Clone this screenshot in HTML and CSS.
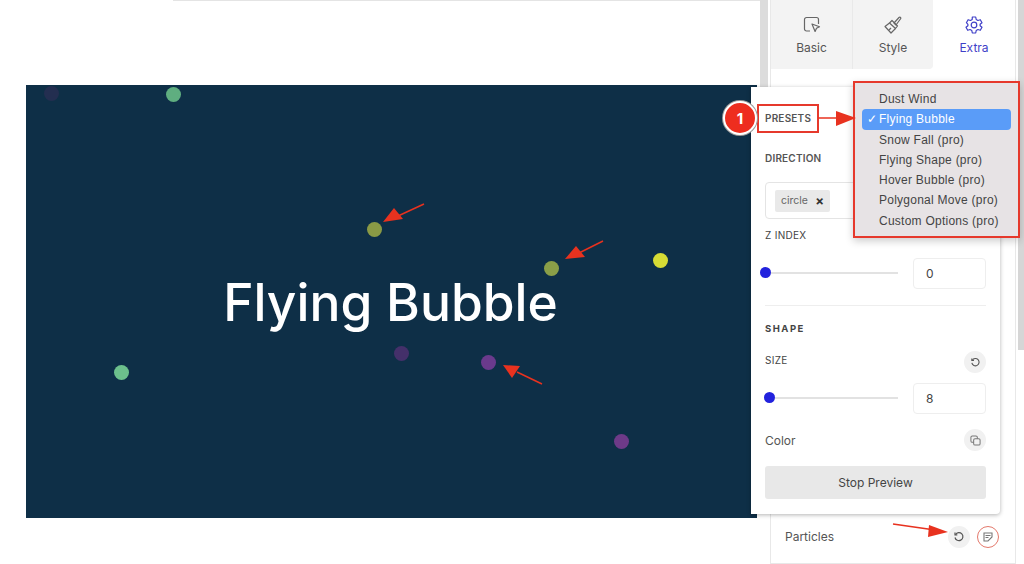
FILE: index.html
```html
<!DOCTYPE html>
<html lang="en">
<head>
  <meta charset="UTF-8">
  <title>Flying Bubble</title>
  <link rel="stylesheet" href="styles.css">
</head>
<body>
  <div class="page">
    <div class="main">
      <div class="topline"></div>
      <div class="banner">
        <span class="bubble b1"></span>
        <span class="bubble b2"></span>
        <span class="bubble b3"></span>
        <span class="bubble b4"></span>
        <span class="bubble b5"></span>
        <span class="bubble b6"></span>
        <span class="bubble b7"></span>
        <span class="bubble b8"></span>
        <span class="bubble b9"></span>
        <h1 class="title">Flying Bubble</h1>
      </div>
    </div>
    <div class="gutter"></div>
    <div class="sidebar">
      <div class="tabs">
        <div class="tab">
          <svg width="20" height="20" viewBox="0 0 20 20" fill="none" stroke="#666" stroke-width="1.200" stroke-linejoin="round"><path d="M8 16H4.500a2 2 0 0 1-2-2V4.500a2 2 0 0 1 2-2h10a2 2 0 0 1 2 2V9"/><path d="M10 9l7.500 2.800-3 1.400-1.400 3.300z"/></svg>
          <span>Basic</span>
        </div>
        <div class="tab tab-style">
          <svg width="20" height="20" viewBox="0 0 20 20" fill="none" stroke="#666" stroke-width="1.200" stroke-linejoin="round"><path d="M11 8l5-5.500c.8-.8 2-.1 1.800 1L13 10z"/><path d="M9 5.500l5.500 5.500-2 2.500L6.500 8z"/><path d="M6.500 8L2 11.500 8 18l4.500-4.500"/><path d="M6 15l2-2"/></svg>
          <span>Style</span>
        </div>
        <div class="tab tab-active">
          <svg width="20" height="20" viewBox="0 0 20 20" fill="none" stroke="#3f3fc8" stroke-width="1.200" stroke-linejoin="round"><path d="M8.300 2h3.400l.5 2.500 1.700 1 2.400-.8 1.700 3-1.900 1.600v1.400l1.900 1.600-1.700 3-2.400-.8-1.700 1-.5 2.500H8.300l-.5-2.500-1.700-1-2.400.8-1.700-3 1.900-1.600V9.300L2.400 7.700l1.700-3 2.400.8 1.700-1z"/><circle cx="10" cy="10" r="2.800"/></svg>
          <span>Extra</span>
        </div>
      </div>
      <div class="particles">
        <span class="particles-name">Particles</span>
        <span class="icon-btn">
          <svg width="12" height="12" viewBox="0 0 12 12" fill="none" stroke="#555" stroke-width="1.200"><path d="M2.500 3.500A4 4 0 1 1 2 6.500"/><path d="M2 1.500v2.300h2.300"/></svg>
        </span>
        <span class="icon-btn icon-btn-ring">
          <svg width="12" height="12" viewBox="0 0 12 12" fill="none" stroke="#777" stroke-width="1.100"><path d="M10 6V2H2v8h4l4-4z"/><path d="M3.500 4.500h5M3.500 6.500h3"/></svg>
        </span>
      </div>
    </div>
    <div class="scrollbar"><div class="thumb"></div></div>

    <div class="panel">
      <div class="label label-strong label-presets">PRESETS</div>
      <div class="label label-strong label-direction">DIRECTION</div>
      <div class="tag-field">
        <span class="chip">circle <b>×</b></span>
      </div>
      <div class="label label-z">Z INDEX</div>
      <div class="slider-row slider-row-z">
        <div class="slider"><span class="knob knob-z"></span></div>
        <div class="num">0</div>
      </div>
      <hr class="sep">
      <div class="shape">SHAPE</div>
      <div class="head-row">
        <span class="label label-size">SIZE</span>
        <span class="icon-btn icon-btn-small">
          <svg width="11" height="11" viewBox="0 0 12 12" fill="none" stroke="#555" stroke-width="1.200"><path d="M2.500 3.500A4 4 0 1 1 2 6.500"/><path d="M2 1.500v2.300h2.300"/></svg>
        </span>
      </div>
      <div class="slider-row slider-row-size">
        <div class="slider"><span class="knob"></span></div>
        <div class="num">8</div>
      </div>
      <div class="head-row color-row">
        <span class="color-name">Color</span>
        <span class="icon-btn icon-btn-small">
          <svg width="11" height="11" viewBox="0 0 12 12" fill="none" stroke="#777" stroke-width="1.100"><rect x="1" y="1" width="7" height="7" rx="1.500"/><rect x="4" y="4" width="7" height="7" rx="1.500" fill="#f1f1f1"/></svg>
        </span>
      </div>
      <div class="stop-btn">Stop Preview</div>
    </div>

    <div class="menu">
      <div class="menu-item">Dust Wind</div>
      <div class="menu-item menu-item-on"><span class="tick">✓</span>Flying Bubble</div>
      <div class="menu-item">Snow Fall (pro)</div>
      <div class="menu-item">Flying Shape (pro)</div>
      <div class="menu-item">Hover Bubble (pro)</div>
      <div class="menu-item">Polygonal Move (pro)</div>
      <div class="menu-item">Custom Options (pro)</div>
    </div>

    <div class="presets-box"></div>
    <div class="badge">1</div>

    <svg class="arrows" width="1024" height="564" viewBox="0 0 1024 564">
      <g fill="#e8321f" stroke="#e8321f">
        <path d="M818 118H838" stroke-width="1.500"/>
        <path d="M836 111L856 118 836 126z" stroke="none"/>
        <path d="M424 204L398 216" stroke-width="1.500"/>
        <path d="M383 222L394 208 403 219z" stroke="none"/>
        <path d="M603 241L577 254" stroke-width="1.500"/>
        <path d="M565 259L576 246 585 257z" stroke="none"/>
        <path d="M542 384L517 372" stroke-width="1.500"/>
        <path d="M503 365L520 366 512 378z" stroke="none"/>
        <path d="M893 524L935 530" stroke-width="1.500"/>
        <path d="M948 532L928 537 929 525z" stroke="none"/>
      </g>
    </svg>
  </div>
</body>
</html>
```

FILE: styles.css
```css
* {
  box-sizing: border-box;
}
body {
  margin: 0;
  font-family: Inter, "Liberation Sans", sans-serif;
  background-color: #fff;
  color: #444;
}
.page {
  position: relative;
  display: flex;
  width: 1024px;
  height: 564px;
  overflow: hidden;
  background-color: #fff;
}

/* left canvas */
.main {
  width: 760px;
  padding-left: 26px;
}
.topline {
  height: 1px;
  margin-left: 147px;
  margin-bottom: 84px;
  background-color: #e4e4e4;
}
.banner {
  position: relative;
  display: flex;
  align-items: center;
  justify-content: center;
  width: 731px;
  height: 433px;
  background-color: #0e2f47;
}
.title {
  margin: 0 0 0 -2px;
  font-family: Inter, "Open Sans", sans-serif;
  font-size: 51.500px;
  font-weight: 500;
  color: #fff;
}
.bubble {
  position: absolute;
  width: 15px;
  height: 15px;
  border-radius: 50%;
}
.b1 { left: 18px; top: 1px; background-color: #232e50; }
.b2 { left: 140px; top: 2px; background-color: #5fae80; }
.b3 { left: 341px; top: 137px; background-color: #8a9a45; }
.b4 { left: 518px; top: 176px; background-color: #8a9f48; }
.b5 { left: 627px; top: 168px; background-color: #d6dc35; }
.b6 { left: 368px; top: 261px; background-color: #44306a; }
.b7 { left: 455px; top: 270px; background-color: #6a3a8c; }
.b8 { left: 88px; top: 280px; background-color: #6cc08c; }
.b9 { left: 588px; top: 349px; background-color: #6d3a88; }

/* sidebar */
.gutter {
  width: 8px;
  height: 300px;
  background-color: #dcdcdc;
}
.sidebar {
  display: flex;
  flex-direction: column;
  width: 246px;
  margin-left: 2px;
  border-left: 1px solid #e8e8e8;
  border-right: 1px solid #e8e8e8;
  border-bottom: 1px solid #e8e8e8;
}
.tabs {
  display: flex;
  height: 69px;
}
.tab {
  display: flex;
  flex-direction: column;
  align-items: center;
  width: 81px;
  padding-top: 15px;
  gap: 5px;
  font-size: 12px;
  background-color: #f3f3f3;
  color: #555;
}
.tab-style {
  border-left: 1px solid #e9e9e9;
  border-bottom-right-radius: 4px;
}
.tab-active {
  flex: 1;
  background-color: #fff;
  color: #3f3fc8;
}
.particles {
  display: flex;
  align-items: center;
  margin-top: auto;
  height: 53px;
  padding: 0 16px 0 14px;
  gap: 7px;
}
.particles-name {
  flex: 1;
  font-size: 12px;
  color: #555;
}
.icon-btn {
  display: flex;
  align-items: center;
  justify-content: center;
  width: 22px;
  height: 22px;
  border-radius: 50%;
  background-color: #f1f1f1;
}
.icon-btn-ring {
  background-color: #fff;
  border: 1px solid #e4796c;
}
.scrollbar {
  width: 6px;
  margin-left: 2px;
}
.thumb {
  height: 350px;
  background-color: #d6d6d6;
}

/* floating panel */
.panel {
  position: absolute;
  left: 751px;
  top: 87px;
  width: 249px;
  height: 427px;
  padding: 25px 14px 0;
  background-color: #fff;
  border-radius: 0 4px 4px 0;
  box-shadow: 0 1px 4px rgba(0, 0, 0, 0.3);
}
.label {
  font-size: 10px;
  line-height: 12px;
  color: #444;
  letter-spacing: 0.3px;
}
.label-strong {
  font-weight: 600;
  letter-spacing: 0.2px;
  color: #555;
}
.label-direction {
  margin-top: 28px;
}
.label-size {
  margin-bottom: 4px;
}
.tag-field {
  display: flex;
  align-items: center;
  width: 221px;
  height: 37px;
  margin-top: 18px;
  padding-left: 9px;
  border: 1px solid #e4e4e4;
  border-radius: 4px;
}
.chip {
  display: flex;
  align-items: center;
  justify-content: space-between;
  width: 55px;
  height: 22px;
  padding: 0 6px;
  font-size: 10.500px;
  color: #666;
  background-color: #e9e9e9;
  border-radius: 2px;
}
.chip b {
  font-size: 13px;
  color: #333;
}
.label-z {
  margin-top: 10px;
}
.slider-row {
  display: flex;
  align-items: center;
  justify-content: space-between;
}
.slider-row-z {
  margin-top: 17px;
}
.slider {
  position: relative;
  width: 133px;
  height: 2px;
  margin-top: -2px;
  background-color: #e2e2e2;
}
.knob {
  position: absolute;
  left: -1px;
  top: -5px;
  width: 11px;
  height: 11px;
  border-radius: 50%;
  background-color: #2222dd;
}
.knob-z {
  left: -5px;
}
.num {
  display: flex;
  align-items: center;
  width: 73px;
  height: 31px;
  padding-left: 12px;
  font-size: 12px;
  border: 1px solid #eeeeee;
  border-radius: 4px;
}
.sep {
  margin: 16px 0 0;
  border: 0;
  border-top: 1px solid #eeeeee;
}
.shape {
  margin-top: 17px;
  font-size: 9.500px;
  font-weight: 700;
  letter-spacing: 1.500px;
  line-height: 12px;
  color: #444;
}
.head-row {
  display: flex;
  align-items: center;
  justify-content: space-between;
  height: 22px;
  margin-top: 16px;
}
.slider-row-size {
  margin-top: 10px;
}
.color-row {
  margin-top: 15px;
}
.color-name {
  font-size: 12px;
  color: #555;
}
.stop-btn {
  display: flex;
  align-items: center;
  justify-content: center;
  height: 33px;
  margin-top: 15px;
  font-size: 12px;
  background-color: #e8e8e8;
  border-radius: 3px;
}

/* native select popup */
.menu {
  position: absolute;
  left: 853px;
  top: 81px;
  width: 167px;
  height: 157px;
  padding: 6px 7px;
  background-color: #e7e3e5;
  border: 2px solid #e6392c;
  box-shadow: 0 3px 8px rgba(0, 0, 0, 0.2);
}
.menu-item {
  position: relative;
  height: 20.300px;
  padding-left: 17px;
  font-family: "Liberation Sans", sans-serif;
  font-size: 12px;
  line-height: 20px;
  letter-spacing: 0.25px;
  color: #444;
  white-space: nowrap;
}
.menu-item-on {
  color: #fff;
  background-color: #5a9cf8;
  border-radius: 4px;
}
.tick {
  position: absolute;
  left: 5px;
}

/* annotations */
.presets-box {
  position: absolute;
  left: 757px;
  top: 104px;
  width: 62px;
  height: 29px;
  border: 2px solid #e6392c;
}
.badge {
  position: absolute;
  left: 723px;
  top: 101px;
  display: flex;
  align-items: center;
  justify-content: center;
  width: 34px;
  height: 34px;
  font-size: 15px;
  font-weight: 700;
  color: #fff;
  background-color: #ee2d1f;
  border: 2px solid #fff;
  border-radius: 50%;
  box-shadow: 0 0 0 1px #999;
}
.arrows {
  position: absolute;
  left: 0;
  top: 0;
}
```
